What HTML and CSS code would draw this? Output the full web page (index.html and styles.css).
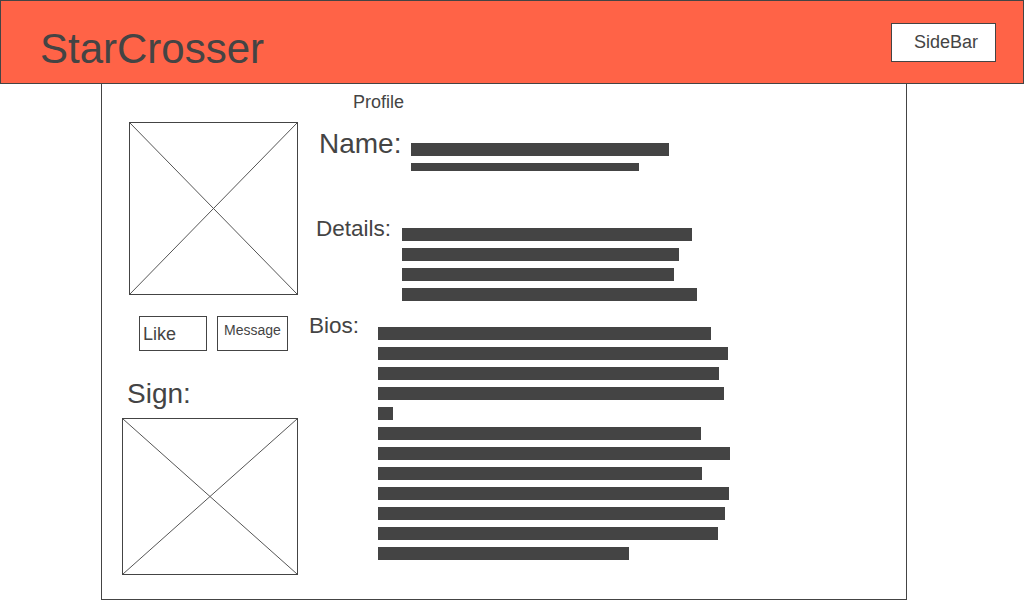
FILE: index.html
```html
<!DOCTYPE html>
<html lang="en">
<head>
    <meta charset="UTF-8">
    <meta name="viewport" content="width=device-width, initial-scale=1.0">
    <title>StarCrosser - Profile</title>
    <link rel="stylesheet" href="styles.css">
</head>
<body>
    <header class="topbar">
        <h1 class="brand">StarCrosser</h1>
        <button class="sidebar-btn">SideBar</button>
    </header>

    <div class="card">
        <div class="profile-title">Profile</div>
        <div class="profile-body">
            <div class="left-col">
                <div class="placeholder photo">
                    <svg viewBox="0 0 100 100" preserveAspectRatio="none">
                        <line x1="0" y1="0" x2="100" y2="100"/>
                        <line x1="100" y1="0" x2="0" y2="100"/>
                    </svg>
                </div>
                <div class="actions">
                    <button class="btn-like">Like</button>
                    <button class="btn-message">Message</button>
                </div>
                <div class="sign-label">Sign:</div>
                <div class="placeholder sign">
                    <svg viewBox="0 0 100 100" preserveAspectRatio="none">
                        <line x1="0" y1="0" x2="100" y2="100"/>
                        <line x1="100" y1="0" x2="0" y2="100"/>
                    </svg>
                </div>
            </div>

            <div class="right-col">
                <div class="row row-name">
                    <div class="label">Name:</div>
                    <div class="bars">
                        <div class="bar" style="width: 258px"></div>
                        <div class="bar bar-thin" style="width: 228px"></div>
                    </div>
                </div>
                <div class="row row-details">
                    <div class="label">Details:</div>
                    <div class="bars">
                        <div class="bar" style="width: 290px"></div>
                        <div class="bar" style="width: 277px"></div>
                        <div class="bar" style="width: 272px"></div>
                        <div class="bar" style="width: 295px"></div>
                    </div>
                </div>
                <div class="row row-bios">
                    <div class="label">Bios:</div>
                    <div class="bars">
                        <div class="bar" style="width: 333px"></div>
                        <div class="bar" style="width: 350px"></div>
                        <div class="bar" style="width: 341px"></div>
                        <div class="bar" style="width: 346px"></div>
                        <div class="bar" style="width: 15px"></div>
                        <div class="bar" style="width: 323px"></div>
                        <div class="bar" style="width: 352px"></div>
                        <div class="bar" style="width: 324px"></div>
                        <div class="bar" style="width: 351px"></div>
                        <div class="bar" style="width: 347px"></div>
                        <div class="bar" style="width: 340px"></div>
                        <div class="bar" style="width: 251px"></div>
                    </div>
                </div>
            </div>
        </div>
    </div>
</body>
</html>
```

FILE: styles.css
```css
* {
    box-sizing: border-box;
}
body {
    font-family: "Liberation Sans", Arial, sans-serif;
    background: #fff;
    color: #444;
    margin: 0;
    width: 1024px;
    height: 600px;
    overflow: hidden;
}
button {
    font-family: inherit;
    color: #444;
    background: #fff;
    border: 1px solid #444;
    border-radius: 0;
    cursor: pointer;
    padding: 0;
}

/* header */
.topbar {
    height: 84px;
    background: #ff6347;
    border: 1px solid #444;
    display: flex;
    justify-content: space-between;
    align-items: flex-start;
}
.brand {
    margin: 18px 0 0 39px;
    font-size: 42px;
    font-weight: normal;
    line-height: 60px;
}
.sidebar-btn {
    margin: 22px 27px 0 0;
    width: 105px;
    height: 39px;
    font-size: 18px;
    padding-left: 5px;
}

/* profile card */
.card {
    display: flow-root;
    margin-left: 101px;
    width: 806px;
    height: 516px;
    border: 1px solid #444;
    border-top: none;
}
.profile-title {
    margin: 9px 0 0 251px;
    font-size: 18px;
    line-height: 18px;
}
.profile-body {
    display: flex;
}
.left-col {
    width: 207px;
    flex-shrink: 0;
}
.placeholder {
    border: 1px solid #444;
    background: #fff;
}
.placeholder svg {
    display: block;
    width: 100%;
    height: 100%;
}
.placeholder line {
    stroke: #555;
    stroke-width: 1;
    vector-effect: non-scaling-stroke;
}
.photo {
    margin: 11px 0 0 27px;
    width: 169px;
    height: 173px;
}
.actions {
    display: flex;
    gap: 10px;
    margin: 21px 0 0 37px;
}
.actions button {
    height: 35px;
}
.btn-like {
    width: 68px;
    font-size: 18px;
    text-align: left;
    padding-left: 3px;
    padding-top: 1px;
}
.btn-message {
    width: 71px;
    font-size: 14px;
    text-align: center;
    line-height: 14px;
    padding-bottom: 8px;
}
.sign-label {
    margin: 29px 0 0 25px;
    font-size: 28px;
    line-height: 28px;
}
.sign {
    margin: 10px 0 0 20px;
    width: 176px;
    height: 157px;
}

/* text rows */
.row {
    display: flex;
    align-items: flex-start;
}
.label {
    line-height: 1;
    flex-shrink: 0;
}
.bars {
    display: flex;
    flex-direction: column;
    gap: 7px;
}
.bar {
    height: 13px;
    background: #444;
}
.bar-thin {
    height: 8px;
}
.row-name {
    margin: 19px 0 0 10px;
}
.row-name .label {
    font-size: 28px;
    width: 92px;
}
.row-name .bars {
    margin-top: 13px;
}
.row-details {
    margin: 47px 0 0 7px;
}
.row-details .label {
    font-size: 22.5px;
    width: 86px;
}
.row-details .bars {
    margin-top: 10px;
}
.row-bios {
    margin-top: 14px;
}
.row-bios .label {
    font-size: 22.5px;
    width: 69px;
}
.row-bios .bars {
    margin-top: 12px;
}
```
